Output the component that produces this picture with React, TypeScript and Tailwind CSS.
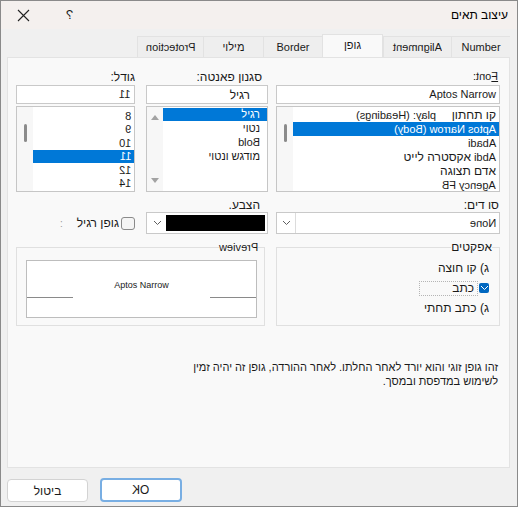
import React from "react";

const FONT = "font-['Liberation_Sans','DejaVu_Sans',sans-serif]";

// English text in this dialog shows up mirrored, so flip it in place
function Mir({ children, className = "" }: { children: React.ReactNode; className?: string }) {
  return (
    <span dir="ltr" className={"inline-block scale-x-[-1] " + className}>
      {children}
    </span>
  );
}

function Chevron({ color = "#5f5f5f" }: { color?: string }) {
  return (
    <svg width="9" height="6" viewBox="0 0 9 6">
      <path d="M1 1l3.5 3.5L8 1" fill="none" stroke={color} strokeWidth="1" />
    </svg>
  );
}

function ScrollThumb() {
  return (
    <div className="w-[16px] bg-[#f7f7f7] flex justify-center pt-[17px]">
      <div className="w-[3px] h-[18px] rounded-full bg-[#8b8b8b]" />
    </div>
  );
}

const tabs: { label: React.ReactNode; w: string; active?: boolean }[] = [
  { label: "Number", w: "w-[59px]" },
  { label: <Mir>Alignment</Mir>, w: "w-[68px]" },
  { label: "גופן", w: "w-[61px]", active: true },
  { label: "Border", w: "w-[59px]" },
  { label: "מילוי", w: "w-[60px]" },
  { label: <Mir>Protection</Mir>, w: "w-[66px]" },
];

export default function App() {
  return (
    <div
      dir="rtl"
      className={`w-[518px] h-[507px] bg-[#f0f0f0] border border-[#8a8a8a] flex flex-col text-[12px] text-[#1a1a1a] ${FONT}`}
    >
      {/* title bar */}
      <div className="h-[28px] bg-[#f4f0ee] flex items-center justify-between pr-[9px] pl-[16px] shrink-0">
        <span className="text-[12px] text-black">עיצוב תאים</span>
        <div className="flex items-center gap-[36px]">
          <Mir className="text-[13px]">?</Mir>
          <svg width="13" height="13" viewBox="0 0 13 13">
            <path d="M1 1l11 11M12 1L1 12" stroke="#222" strokeWidth="1.1" />
          </svg>
        </div>
      </div>

      {/* tabs */}
      <div className="flex items-end h-[23px] mt-[5px] pr-[7px] shrink-0">
        {tabs.map((t, i) => (
          <div
            key={i}
            className={
              t.active
                ? `${t.w} h-[23px] bg-[#f9f9f9] border border-b-0 border-[#e2e2e2] flex items-center justify-center text-[11px] pb-[1px]`
                : `${t.w} h-[21px] bg-[#eeeeee] border-l border-t border-[#e2e2e2] flex items-center justify-center text-[11px]`
            }
          >
            {t.label}
          </div>
        ))}
      </div>

      {/* panel */}
      <div className="h-[411px] mr-[7px] ml-[6px] bg-[#f9f9f9] border border-[#e3e3e3] pt-[10px] pr-[9px] pl-[8px] flex flex-col shrink-0">
        {/* font / style / size */}
        <div className="flex gap-x-[8px]">
          <div className="w-[224px] flex flex-col">
            <div className="h-[14px] pr-[2px] text-[11px]">
              <Mir><span className="underline">F</span>ont:</Mir>
            </div>
            <div className="mt-[3px] h-[19px] bg-white border border-[#c9c9c9] flex items-center pr-[3px] text-[11px]">
              Aptos Narrow
            </div>
            <div className="mt-[2px] h-[86px] bg-white border border-[#c6c6c6] flex">
              <div className="flex-1 flex flex-col pt-[1px] text-[11px]">
                <div className="h-[14px] flex items-center gap-[16px] pr-[3px]">
                  <span className="text-[12px]">קו תחתון</span>
                  <Mir>play: (Headings)</Mir>
                </div>
                <div className="h-[14px] flex items-center pr-[3px] bg-[#0078d7] text-white">
                  <Mir>Aptos Narrow (Body)</Mir>
                </div>
                <div className="h-[14px] flex items-center pr-[3px]">
                  <Mir>Abadi</Mir>
                </div>
                <div className="h-[14px] flex items-center pr-[3px] gap-[3px]">
                  <Mir>Abdi</Mir>
                  <span className="text-[12px]">אקסטרה לייט</span>
                </div>
                <div className="h-[14px] flex items-center pr-[3px] text-[12px]">אדם תצוגה</div>
                <div className="h-[14px] flex items-center pr-[3px]">
                  <Mir>Agency FB</Mir>
                </div>
              </div>
              <ScrollThumb />
            </div>
          </div>

          <div className="w-[122px] ml-[3px] flex flex-col">
            <div className="h-[14px] pr-[6px]">סגנון פאנטה:</div>
            <div className="mt-[3px] h-[19px] bg-white border border-[#c9c9c9] flex items-center pr-[17px]">
              רגיל
            </div>
            <div className="mt-[2px] h-[86px] bg-white border border-[#c6c6c6] flex">
              <div className="flex-1 flex flex-col pt-[1px]">
                <div className="h-[13px] flex items-center pr-[7px] bg-[#0078d7] text-white text-[11px]">רגיל</div>
                <div className="h-[14px] flex items-center pr-[7px] text-[11px]">נטוי</div>
                <div className="h-[14px] flex items-center pr-[7px] text-[11px]">
                  <Mir>Bold</Mir>
                </div>
                <div className="h-[14px] flex items-center pr-[7px] text-[11px]">מודגש ונטוי</div>
              </div>
              <div className="w-[16px] bg-[#f7f7f7] flex flex-col items-center justify-between py-[8px]">
                <svg width="8" height="5" viewBox="0 0 8 5">
                  <path d="M4 0L8 5H0z" fill="#a3a3a3" />
                </svg>
                <svg width="8" height="5" viewBox="0 0 8 5">
                  <path d="M0 0h8L4 5z" fill="#a3a3a3" />
                </svg>
              </div>
            </div>
          </div>

          <div className="w-[119px] flex flex-col">
            <div className="h-[14px]">גודל:</div>
            <div className="mt-[3px] h-[19px] bg-white border border-[#c9c9c9] flex items-center pr-[4px] text-[11px]">
              <Mir>11</Mir>
            </div>
            <div className="mt-[2px] h-[86px] bg-white border border-[#c6c6c6] flex">
              <div className="flex-1 flex flex-col pt-[2px] text-[11px]">
                {["8", "9", "10", "11", "12", "14"].map((s) => (
                  <div
                    key={s}
                    className={
                      s === "11"
                        ? "h-[13.5px] flex items-center pr-[3px] bg-[#0078d7] text-white"
                        : "h-[13.5px] flex items-center pr-[3px]"
                    }
                  >
                    <Mir>{s}</Mir>
                  </div>
                ))}
              </div>
              <ScrollThumb />
            </div>
          </div>
        </div>

        {/* underline / colour / normal font */}
        <div className="flex gap-x-[8px] mt-[7px]">
          <div className="w-[224px] flex flex-col">
            <div className="h-[13px] pr-[1px] leading-[13px]">סו דים:</div>
            <div className="h-[22px] bg-white border border-[#c9c9c9] flex items-center justify-between pr-[3px] text-[11px]">
              <Mir>None</Mir>
              <div className="w-[19px] h-full border-r border-[#dcdcdc] flex items-center justify-center">
                <Chevron />
              </div>
            </div>
          </div>
          <div className="w-[122px] ml-[3px] flex flex-col">
            <div className="h-[13px] pr-[8px] leading-[13px]">הצבע.</div>
            <div className="h-[22px] bg-white border border-[#c9c9c9] flex items-center p-[2px] gap-[1px]">
              <div className="flex-1 h-full bg-black" />
              <div className="w-[16px] h-full flex items-center justify-center">
                <Chevron />
              </div>
            </div>
          </div>
          <div className="w-[119px] flex items-end pb-[3px]">
            <div className="flex items-center gap-[2px] h-[16px]">
              <div className="w-[14px] h-[13px] rounded-[3px] border border-[#8a8a8a] bg-[#f5f5f5]" />
              <span className="text-[12px]">גופן רגיל</span>
              <span className="mr-[12px] text-[10px] text-[#999]">:</span>
            </div>
          </div>
        </div>

        {/* effects / preview */}
        <div className="flex gap-x-[11px] mt-[7px]">
          <fieldset className="w-[224px] h-[85px] border border-[#e0e0e0] pr-[10px]">
            <legend className="mr-[-3px] h-[12px] leading-[12px] text-[12px]">אפקטים</legend>
            <div className="flex flex-col pt-[5px]">
              <div className="h-[20px] flex items-center">ג) קו חוצה</div>
              <div className="h-[20px] flex items-center">
                <div className="w-[10px] h-[10px] rounded-[2px] bg-[#0067c0] flex items-center justify-center ml-[1px]">
                  <Chevron color="#ffffff" />
                </div>
                <div className="w-[59px] h-[15px] border border-dotted border-[#b5b5b5] flex items-center pr-[3px]">
                  כתב
                </div>
              </div>
              <div className="h-[20px] flex items-center">ג) כתב תחתי</div>
            </div>
          </fieldset>
          <fieldset className="w-[249px] h-[85px] border border-[#e0e0e0] pr-[7px] pl-[9px]">
            <legend className="mr-[-1px] h-[12px] leading-[12px] text-[11px]">
              <Mir>Preview</Mir>
            </legend>
            <div className="mt-[7px] h-[58px] bg-white border border-[#bdbdbd] flex flex-col">
              <div className="pt-[18px] h-[31px] text-center text-[9px] leading-[12px]">Aptos Narrow</div>
              <div className="mt-[5px] flex justify-between">
                <div className="w-[46px] border-t border-[#8a8a8a]" />
                <div className="w-[46px] border-t border-[#8a8a8a]" />
              </div>
            </div>
          </fieldset>
        </div>

        {/* description */}
        <div className="mt-[34px] pr-[2px] text-[11px] leading-[14px]">
          <div>זהו גופן זוגי והוא יורד לאחר החלתו. לאחר ההורדה, גופן זה יהיה זמין</div>
          <div>לשימוש במדפסת ובמסך.</div>
        </div>
      </div>

      {/* buttons */}
      <div className="flex justify-end gap-[12px] ml-[6px] mt-[10px]">
        <button className="w-[82px] h-[24px] rounded-[4px] bg-white border-2 border-[#78aee3] flex items-center justify-center text-[12px]">
          <Mir>OK</Mir>
        </button>
        <button className="w-[81px] h-[23px] mt-[1px] rounded-[4px] bg-white border border-[#d3d3d3] flex items-center justify-center text-[12px]">
          ביטול
        </button>
      </div>
    </div>
  );
}
